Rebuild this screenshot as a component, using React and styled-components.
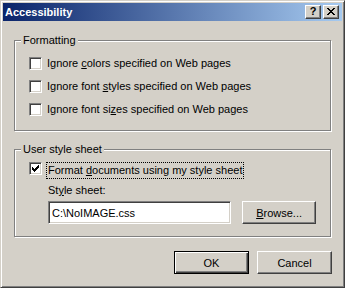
import styled, { createGlobalStyle } from "styled-components"

const GlobalStyle = createGlobalStyle`
  html, body {
    margin: 0;
    padding: 0;
    background: #d4d0c8;
  }
  body {
    font-family: "Liberation Sans", Arial, sans-serif;
    font-size: 11px;
    color: #000;
  }
`

const CLOSE = [
    "xx....xx",
    ".xx..xx.",
    "..xxxx..",
    "...xx...",
    "..xxxx..",
    ".xx..xx.",
    "xx....xx",
]

const TICK = [
    "......x",
    ".....xx",
    "x...xxx",
    "xx.xxx.",
    "xxxxx..",
    ".xxx...",
    "..x....",
]

const Pixels = ({ rows }) => (
    <svg width={rows[0].length} height={rows.length} shapeRendering="crispEdges">
        {rows.flatMap((row, y) =>
            [...row].map((c, x) =>
                c === "x" ? <rect key={`${x}-${y}`} x={x} y={y} width="1" height="1" fill="#000" /> : null
            )
        )}
    </svg>
)

const Checkbox = ({ checked }) => (
    <Box>{checked && <Pixels rows={TICK} />}</Box>
)

const App = () => {
    return (
        <>
            <GlobalStyle />
            <Window>
                <TitleBar>
                    <Title>Accessibility</Title>
                    <CaptionButtons>
                        <CaptionButton><Help>?</Help></CaptionButton>
                        <CaptionButton><Pixels rows={CLOSE} /></CaptionButton>
                    </CaptionButtons>
                </TitleBar>
                <Body>
                    <Group $h={91} $top={16}>
                        <Legend>Formatting</Legend>
                        <CheckList>
                            <CheckRow>
                                <Checkbox />
                                <CheckLabel>Ignore <u>c</u>olors specified on Web pages</CheckLabel>
                            </CheckRow>
                            <CheckRow>
                                <Checkbox />
                                <CheckLabel>Ignore font <u>s</u>tyles specified on Web pages</CheckLabel>
                            </CheckRow>
                            <CheckRow>
                                <Checkbox />
                                <CheckLabel>Ignore font si<u>z</u>es specified on Web pages</CheckLabel>
                            </CheckRow>
                        </CheckList>
                    </Group>
                    <Group $h={88} $top={12}>
                        <Legend>User style sheet</Legend>
                        <CheckRow>
                            <Checkbox checked />
                            <CheckLabel $focused>Format <u>d</u>ocuments using my style sheet</CheckLabel>
                        </CheckRow>
                        <SheetBlock>
                            <FieldLabel>St<u>y</u>le sheet:</FieldLabel>
                            <FieldRow>
                                <TextField readOnly defaultValue="C:\NoIMAGE.css" />
                                <Button><u>B</u>rowse...</Button>
                            </FieldRow>
                        </SheetBlock>
                    </Group>
                    <ButtonRow>
                        <Button $default>OK</Button>
                        <Button>Cancel</Button>
                    </ButtonRow>
                </Body>
            </Window>
        </>
    )
}

export default App

const Window = styled.div`
    width: 345px;
    height: 288px;
    box-sizing: border-box;
    background: #d4d0c8;
    border: 1px solid;
    border-color: #d4d0c8 #404040 #404040 #d4d0c8;
    box-shadow: inset 1px 1px #fff, inset -1px -1px #808080;
    padding: 2px;
    display: flex;
    flex-direction: column;
`

const TitleBar = styled.div`
    height: 18px;
    flex-shrink: 0;
    display: flex;
    align-items: center;
    justify-content: space-between;
    padding: 0 3px 0 2px;
    background: linear-gradient(to right, #0a246a, #a6caf0);
`

const Title = styled.span`
    color: #fff;
    font-weight: bold;
    font-size: 11px;
    line-height: 13px;
`

const CaptionButtons = styled.div`
    display: flex;
    gap: 2px;
`

const CaptionButton = styled.div`
    width: 16px;
    height: 14px;
    box-sizing: border-box;
    background: #d4d0c8;
    border: 1px solid;
    border-color: #fff #404040 #404040 #fff;
    box-shadow: inset -1px -1px #808080;
    display: flex;
    align-items: center;
    justify-content: center;
    padding-bottom: 1px;
`

const Help = styled.span`
    font-weight: bold;
    font-size: 11px;
    line-height: 11px;
`

const Body = styled.div`
    flex: 1;
    display: flex;
    flex-direction: column;
    padding: 19px 11px 11px;
`

const Group = styled.div`
    position: relative;
    height: ${p => p.$h}px;
    flex-shrink: 0;
    box-sizing: border-box;
    border: 1px solid #808080;
    box-shadow: inset 1px 1px #fff, 1px 1px #fff;
    padding: ${p => p.$top}px 14px 0;

    & + & {
        margin-top: 18px;
    }
`

const Legend = styled.span`
    position: absolute;
    top: -7px;
    left: 6px;
    padding: 0 2px;
    background: #d4d0c8;
    line-height: 13px;
`

const CheckList = styled.div`
    display: flex;
    flex-direction: column;
    gap: 10px;
`

const CheckRow = styled.div`
    display: flex;
    align-items: flex-start;
    gap: 4px;
`

const Box = styled.div`
    width: 13px;
    height: 13px;
    flex-shrink: 0;
    box-sizing: border-box;
    background: #fff;
    border: 1px solid;
    border-color: #808080 #fff #fff #808080;
    box-shadow: inset 1px 1px #404040, inset -1px -1px #d4d0c8;
    display: flex;
    align-items: center;
    justify-content: center;
`

const CheckLabel = styled.span`
    line-height: 13px;
    padding: ${p => (p.$focused ? "1px 1px" : "0 1px")};
    border: ${p => (p.$focused ? "1px dotted #000" : "none")};
`

const SheetBlock = styled.div`
    margin: 5px 0 0 18px;
    display: flex;
    flex-direction: column;
    gap: 4px;
`

const FieldLabel = styled.span`
    line-height: 13px;
    padding-left: 1px;
`

const FieldRow = styled.div`
    display: flex;
    gap: 11px;
    padding-left: 1px;
`

const TextField = styled.input`
    width: 186px;
    height: 23px;
    box-sizing: border-box;
    margin: 0;
    padding: 0 3px;
    font: inherit;
    color: #000;
    background: #fff;
    border: 1px solid;
    border-color: #808080 #fff #fff #808080;
    box-shadow: inset 1px 1px #404040, inset -1px -1px #d4d0c8;
    outline: none;
`

const Button = styled.div`
    width: 75px;
    height: 23px;
    box-sizing: border-box;
    background: #d4d0c8;
    display: flex;
    align-items: center;
    justify-content: center;
    border: 1px solid;
    border-color: ${p => (p.$default ? "#000" : "#fff #404040 #404040 #fff")};
    box-shadow: ${p =>
        p.$default
            ? "inset 1px 1px #fff, inset -1px -1px #404040, inset -2px -2px #808080"
            : "inset -1px -1px #808080"};
`

const ButtonRow = styled.div`
    display: flex;
    justify-content: flex-end;
    gap: 8px;
    margin: 14px -1px 0 0;
`
